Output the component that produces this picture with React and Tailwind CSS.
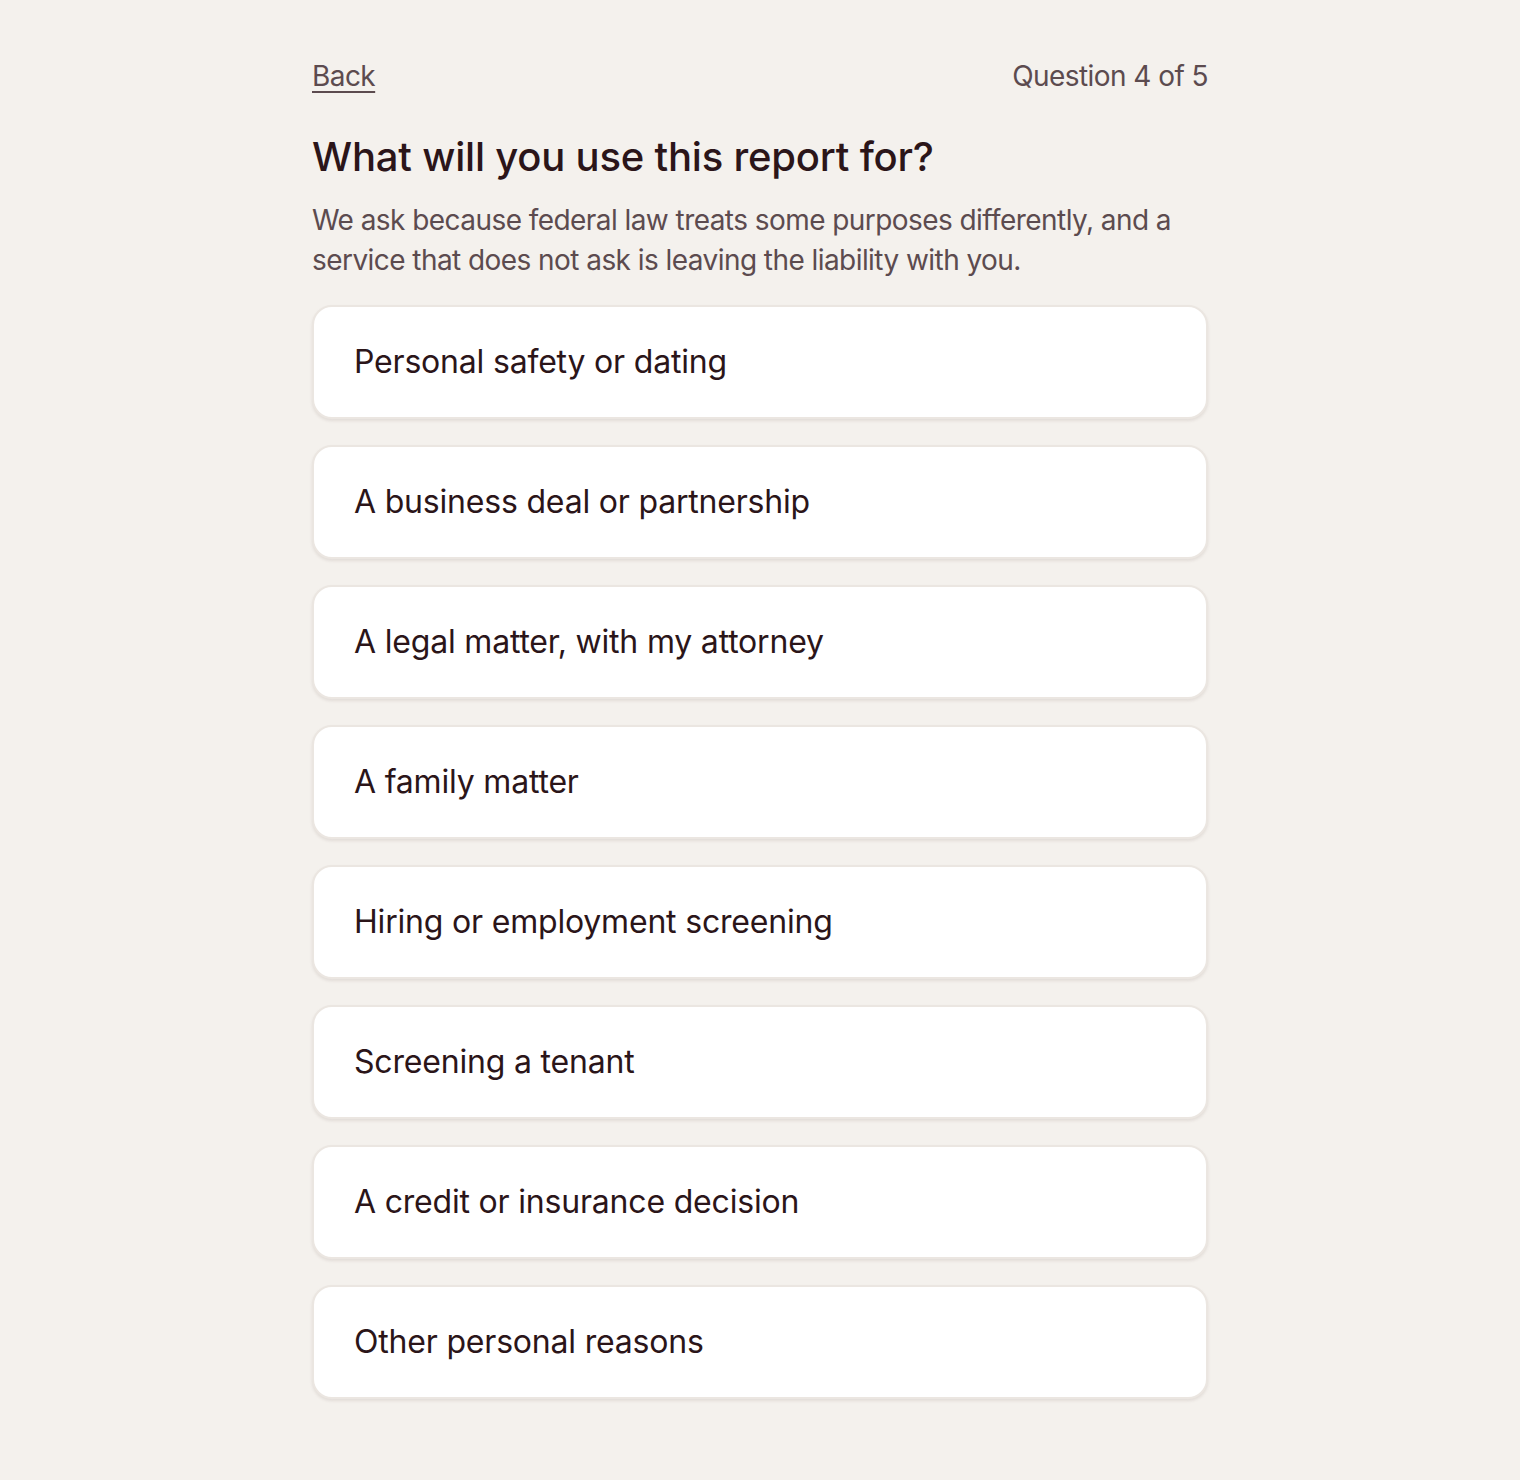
import React from 'react';

const options = [
  'Personal safety or dating',
  'A business deal or partnership',
  'A legal matter, with my attorney',
  'A family matter',
  'Hiring or employment screening',
  'Screening a tenant',
  'A credit or insurance decision',
  'Other personal reasons',
];

const App = () => {
  return (
    <div className="min-h-screen bg-[#f4f1ed] font-['Inter',sans-serif] text-[#2b1519]">
      <div className="mx-auto max-w-4xl pt-14 pb-20">
        <div className="flex items-center justify-between text-[28px] leading-10 text-[#5c4b4f] tracking-[-0.02em]">
          <button className="underline underline-offset-[5px] decoration-[1.5px]">Back</button>
          <span>Question 4 of 5</span>
        </div>

        <h1 className="mt-[37px] text-[40px] leading-[48px] font-medium tracking-[-0.005em]">
          What will you use this report for?
        </h1>
        <p className="mt-[19px] text-[28px] leading-10 text-[#5c4b4f] tracking-[-0.02em]">
          We ask because federal law treats some purposes differently, and a service that does not ask is leaving the liability with you.
        </p>

        <div className="mt-[25px] flex flex-col gap-[26px]">
          {options.map((label) => (
            <button
              key={label}
              className="flex h-[114px] items-center rounded-[20px] border-2 border-[#ebe6e1] bg-white px-10 text-left text-[32px] tracking-[-0.006em] shadow-[0_2px_3px_rgba(120,100,90,0.14)]"
            >
              {label}
            </button>
          ))}
        </div>
      </div>
    </div>
  );
};

export default App;
